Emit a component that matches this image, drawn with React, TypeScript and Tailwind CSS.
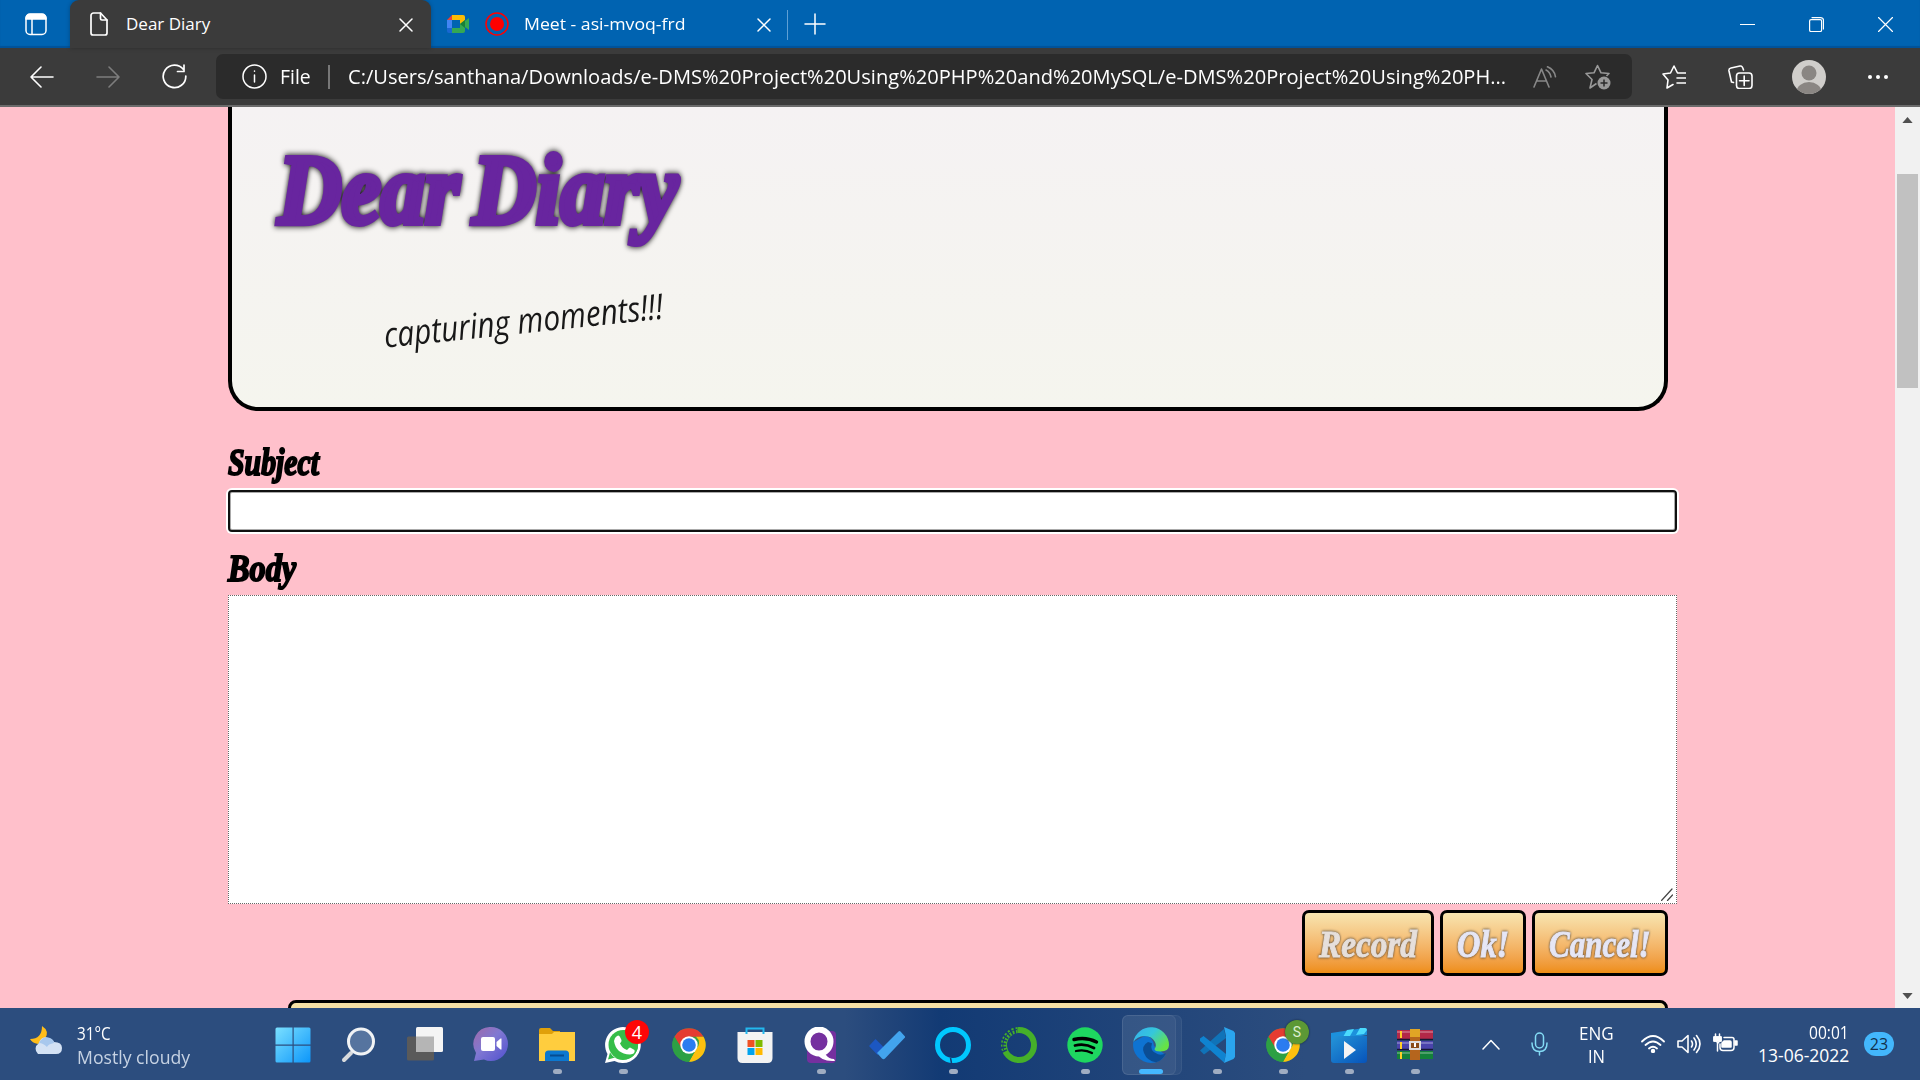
import { useLayoutEffect, useRef, useState } from "react";
import type { ReactNode } from "react";

/** One line of text, condensed or widened to fill the width of its box. */
function Fit({ children, box, className = "" }: { children: string; box: string; className?: string }) {
  const outer = useRef<HTMLSpanElement>(null);
  const inner = useRef<HTMLSpanElement>(null);
  const [scale, setScale] = useState(1);
  useLayoutEffect(() => {
    if (outer.current && inner.current) setScale(outer.current.offsetWidth / inner.current.offsetWidth);
  }, [children]);
  return (
    <span ref={outer} className={`block shrink-0 ${box}`}>
      <span ref={inner} className={`inline-block origin-left whitespace-nowrap ${className}`} style={{ transform: `scaleX(${scale})` }}>
        {children}
      </span>
    </span>
  );
}

function Stroke({ className, box, width = 1.5, children }: { className: string; box: string; width?: number; children: ReactNode }) {
  return (
    <svg viewBox={box} className={`block shrink-0 ${className}`} fill="none" stroke="currentColor" strokeWidth={width} strokeLinecap="round" strokeLinejoin="round">
      {children}
    </svg>
  );
}

function TabBar() {
  return (
    <div className="flex h-12 items-center bg-[#0063b1] text-white shadow-[inset_0_-2px_1px_#00529a]">
      <Stroke className="ml-[25px] h-[23px] w-[22px]" box="0 0 22 23">
        <rect x="1" y="1.5" width="20" height="20" rx="4" />
        <path d="M1 6V5a4 4 0 014-4h12a4 4 0 014 4v1z" fill="currentColor" />
        <path d="M7 6v15" />
      </Stroke>
      <div className="ml-[23px] flex h-12 w-[361px] items-center rounded-t-[9px] bg-[#3b3b3b] shadow-[0_0_4px_#0004]">
        <Stroke className="ml-5 h-[24px] w-[18px]" box="0 0 18 24" width={1.7}>
          <path d="M3.500 1h7L17 8v13a2 2 0 01-2 2H3a2 2 0 01-2-2V3.500A2.500 2.500 0 013.500 1z" />
          <path d="M10.500 1v5.500Q10.500 8 12 8h5" />
        </Stroke>
        <Fit box="ml-[18px] w-[84px]" className="font-['Open_Sans'] text-[17px] leading-6">Dear Diary</Fit>
        <Stroke className="ml-[189px] mt-[2px] h-[14px] w-[14px]" box="0 0 14 14"><path d="M1 1l12 12M13 1L1 13" /></Stroke>
      </div>
      <svg viewBox="0 0 22 18" className="ml-4 h-[18px] w-[22px] shrink-0">
        <path d="M0 5L5 0v5z" fill="#ea4335" /><path d="M5 0h11q2 0 2 2v5l-5 3V5H5z" fill="#fbbc04" />
        <path d="M0 5h5v8H0z" fill="#4285f4" /><path d="M0 13h5v5H2q-2 0-2-2z" fill="#1967d2" />
        <path d="M5 13h8V9l5-4v11q0 2-2 2H5zM18 6l4-3v12l-4-3z" fill="#34a853" /><path d="M13 9l5-4v8z" fill="#188038" />
      </svg>
      <svg viewBox="0 0 24 24" className="ml-4 h-6 w-6 shrink-0"><circle cx="12" cy="12" r="11" fill="none" stroke="#f00" strokeWidth="1.500" /><circle cx="12" cy="12" r="7" fill="#f00" /></svg>
      <Fit box="ml-[15px] w-[161px]" className="font-['Open_Sans'] text-[17px] leading-6">Meet - asi-mvoq-frd</Fit>
      <Stroke className="ml-[72px] mt-[2px] h-[14px] w-[14px]" box="0 0 14 14"><path d="M1 1l12 12M13 1L1 13" /></Stroke>
      <div className="ml-4 mt-[2px] h-[30px] w-px bg-[#5fa0d5]" />
      <Stroke className="ml-4 h-[22px] w-[22px]" box="0 0 22 22"><path d="M11 1v20M1 11h20" /></Stroke>
      <Stroke className="ml-auto h-[15px] w-[15px]" box="0 0 15 15" width={1.2}><path d="M0 7.500h15" /></Stroke>
      <Stroke className="ml-[54px] h-[15px] w-[15px]" box="0 0 15 15" width={1.2}><rect x=".6" y="2.600" width="12" height="12" rx="1.500" /><path d="M3 .6h8.500a3 3 0 013 3V12" /></Stroke>
      <Stroke className="ml-[54px] mr-[27px] h-[15px] w-[15px]" box="0 0 15 15" width={1.2}><path d="M.5.5l14 14M14.500.5l-14 14" /></Stroke>
    </div>
  );
}

function AddressRow() {
  return (
    <div className="flex h-[59px] items-center border-b-2 border-[#6b6b6b] bg-[#3b3b3b] text-white">
      <Stroke className="ml-[30px] h-[22px] w-6" box="0 0 24 22" width={1.6}><path d="M23 11H1M11 1L1 11l10 10" /></Stroke>
      <Stroke className="ml-[42px] h-[22px] w-6 text-[#7d7d7d]" box="0 0 24 22" width={1.6}><path d="M1 11h22M13 1l10 10-10 10" /></Stroke>
      <Stroke className="ml-[42px] h-[25px] w-[25px]" box="0 0 25 25" width={1.7}><path d="M21.500 5.500A11.300 11.300 0 1023.800 12M22 1v6.500h-6.500" /></Stroke>
      <div className="ml-[29px] flex h-[45px] w-[1416px] items-center rounded-[7px] bg-[#2b2b2b]">
        <Stroke className="ml-[26px] h-[25px] w-[25px]" box="0 0 25 25"><circle cx="12.500" cy="12.500" r="11.500" /><path d="M12.500 11v7M12.500 7v.3" /></Stroke>
        <Fit box="ml-[13px] w-[31px]" className="font-['Open_Sans'] text-[20px] leading-7">File</Fit>
        <div className="ml-[17px] h-6 w-[1.500px] bg-[#777]" />
        <Fit box="ml-[18.500px] w-[1158px]" className="font-['Open_Sans'] text-[20px] leading-7">C:/Users/santhana/Downloads/e-DMS%20Project%20Using%20PHP%20and%20MySQL/e-DMS%20Project%20Using%20PH...</Fit>
        <Stroke className="ml-[27px] h-[22px] w-6 text-[#888]" box="0 0 24 22" width={1.6}><path d="M1 21L8.500 3 16 21M4 15h9M13 4q4 2 5 7M14.500.8q7 3 8 10" /></Stroke>
        <svg viewBox="0 0 26 26" className="ml-[28px] h-[26px] w-[26px] shrink-0 text-[#999]">
          <path d="M11.500 19.500L5 24l2-8.500L1 9.500l8-.7L12.500 1.500 16 8.800l8 .7-2.500 2.500" fill="none" stroke="currentColor" strokeWidth="1.600" strokeLinejoin="round" />
          <circle cx="19" cy="19" r="6.500" fill="currentColor" /><path d="M19 15.500v7M15.500 19h7" stroke="#2b2b2b" strokeWidth="1.500" />
        </svg>
      </div>
      <Stroke className="ml-[30px] h-6 w-6" box="0 0 24 24" width={1.6}><path d="M11 19.500L5 23l1-8L1 9l7.500-1L12 1l3.500 7h8M15 13h8.500M15 18h8.500" /></Stroke>
      <Stroke className="ml-[42px] h-6 w-[25px]" box="0 0 25 24" width={1.6}>
        <path d="M5.500 17.500L3.500 17 1 6Q.5 3.500 3 3l9-2q2.500-.5 3.500 4" /><rect x="8.500" y="8" width="15.500" height="15.500" rx="3" /><path d="M16.200 11v9.500M11.500 15.700H21" />
      </Stroke>
      <svg viewBox="0 0 34 34" className="ml-[39px] h-[34px] w-[34px] shrink-0">
        <clipPath id="face"><circle cx="17" cy="17" r="17" /></clipPath>
        <g clipPath="url(#face)"><rect width="34" height="34" fill="#d0cecb" /><circle cx="17" cy="13" r="7.500" fill="#8a8683" /><ellipse cx="17" cy="32" rx="12.500" ry="10" fill="#8a8683" /></g>
      </svg>
      <svg viewBox="0 0 20 4" className="ml-[42px] h-1 w-5 fill-white"><circle cx="2" cy="2" r="2" /><circle cx="10" cy="2" r="2" /><circle cx="18" cy="2" r="2" /></svg>
    </div>
  );
}

const script = "font-['Liberation_Serif'] font-bold italic";

function DiaryButton({ label, box, text, tone }: { label: string; box: string; text: string; tone: string }) {
  return (
    <button className={`flex h-[66px] items-center justify-center rounded-[7px] border-[3px] border-black bg-linear-to-b from-[#f7e5b0] to-[#ee8e12] pt-[2px] ${box}`}>
      <Fit box={text} className={`${script} ${tone} text-[38px] leading-[50px] [-webkit-text-stroke:1px_currentColor] drop-shadow-[0_0_1.5px_#333]`}>{label}</Fit>
    </button>
  );
}

function DiaryPage() {
  return (
    <div className="flex h-[901px] bg-[#ffc0cb]">
      <main className="h-full flex-1 overflow-hidden pl-[228px]">
        <header className="h-[304px] w-[1440px] rounded-b-[30px] border-4 border-t-0 border-black bg-linear-to-b from-[#f5f2f3] to-[#f5f5ee] pl-[46px] pt-[28px]">
          <Fit box="w-[400px] h-[110px]" className={`${script} text-[99px] leading-[110px] text-[#68259f] [word-spacing:-10px] [-webkit-text-stroke:6px_currentColor] drop-shadow-[0_0_3px_#000]`}>Dear Diary</Fit>
          <div className="ml-[105px] mt-[45px] w-[284px] -rotate-6">
            <Fit box="w-[280px] h-[60px]" className="font-['Open_Sans'] text-[35px] italic leading-[60px] text-[#181818]">capturing moments!!!</Fit>
          </div>
        </header>
        <div className="h-[28px]" />
        <Fit box="w-[91px] h-[48px]" className={`${script} text-[38px] leading-[46px] text-black [-webkit-text-stroke:2px_currentColor]`}>Subject</Fit>
        <div className="mt-[3px] h-[42px] w-[1449px] rounded-[4px] border-2 border-[#101010] bg-white shadow-[0_0_0_2px_#fff,inset_0_0_0_1px_#aaa]" />
        <Fit box="mt-[13px] w-[68px] h-[50px]" className={`${script} text-[38px] leading-[46px] text-black [-webkit-text-stroke:2px_currentColor]`}>Body</Fit>
        <div className="flex h-[309px] w-[1449px] items-end justify-end border border-dotted border-[#666] bg-white pb-[2px] pr-[3px]">
          <Stroke className="h-[13px] w-3 text-[#444]" box="0 0 12 13" width={1.2}><path d="M.5 12.500L11 1M6.500 12.500L11.500 7" /></Stroke>
        </div>
        <div className="mt-[6px] flex w-[1440px] justify-end gap-[6px]">
          <DiaryButton label="Record" box="w-[132px]" text="w-[98px]" tone="text-[#e6dfdb]" />
          <DiaryButton label="Ok!" box="w-[86px]" text="w-[52px]" tone="text-[#e6e6f5]" />
          <DiaryButton label="Cancel!" box="w-[136px]" text="w-[102px]" tone="text-[#e6e6f5]" />
        </div>
        <div className="ml-[60px] mt-[24px] h-[60px] w-[1380px] rounded-[8px] border-[3px] border-black bg-[#f5e0a5]" />
      </main>
      <div className="flex w-[25px] flex-col items-center bg-[#f1f1f1]">
        <svg viewBox="0 0 12 7" className="mt-[10px] h-[6px] w-[11px] fill-[#505050]"><path d="M0 7l6-7 6 7z" /></svg>
        <div className="mt-[51px] h-[214px] w-[21px] bg-[#c1c1c1]" />
        <svg viewBox="0 0 12 7" className="mb-[9px] mt-auto h-[6px] w-[11px] fill-[#505050]"><path d="M0 0h12L6 7z" /></svg>
      </div>
    </div>
  );
}

function Chrome() {
  return (
    <g>
      <circle cx="18" cy="18" r="16.700" fill="#34a045" />
      <path d="M3.500 9.700A16.700 16.700 0 0132.500 9.700H18L11 22z" fill="#e53c31" />
      <path d="M32.500 9.700A16.700 16.700 0 0118 34.700l7-12.500a8 8 0 000-12.500z" fill="#fdc00f" />
      <path d="M3.500 9.700l7.500 12.500 7 4 6-2-6 10.500A16.700 16.700 0 013.500 9.700z" fill="#2da044" />
      <circle cx="18" cy="18" r="8.700" fill="#fff" /><circle cx="18" cy="18" r="6.800" fill="#2b7cf0" />
    </g>
  );
}

const apps: { name: string; mark?: "open" | "active"; badge?: string; art: ReactNode }[] = [
  { name: "start", art: <g><defs><linearGradient id="win" x1="0" y1="0" x2="1" y2="1"><stop stopColor="#7be0ff" /><stop offset="1" stopColor="#0c96fa" /></linearGradient></defs><path d="M2 .5h15.500v17H.5V2Q.5.500 2 .500zM18.700.500H34q1.500 0 1.500 1.500v15.500H18.700zM.5 18.700h17v16.800H2q-1.500 0-1.500-1.500zM18.700 18.700h16.800V34q0 1.500-1.500 1.500H18.700z" fill="url(#win)" /></g> },
  { name: "search", art: <g><path d="M10 26l-7 7" stroke="#d8dadd" strokeWidth="4" strokeLinecap="round" /><circle cx="20" cy="14.500" r="12.500" fill="#56749f" stroke="#f1f3f5" strokeWidth="3" /></g> },
  { name: "task view", art: <g><rect x="0" y="9.500" width="27" height="24" rx="1.500" fill="#5a5a5a" /><rect x="9" y="0" width="27" height="25" rx="1.500" fill="#f4f4f4" /><path d="M9 9.500h18V25H9z" fill="#b5b5b5" /></g> },
  { name: "chat", art: <g><defs><linearGradient id="chat" x1="0" y1="0" x2="1" y2="1"><stop stopColor="#a06aa8" /><stop offset=".45" stopColor="#8078d2" /><stop offset="1" stopColor="#5050cf" /></linearGradient></defs><path d="M18 0a17 17 0 110 34q-4 0-7-1.500L1 34l2-8A17 17 0 0118 0z" fill="url(#chat)" /><rect x="8" y="10" width="14" height="14" rx="2" fill="#fff" /><path d="M23.500 15l4-3.500h1v11h-1l-4-3.500z" fill="#fff" /></g> },
  { name: "files", mark: "open", art: <g><path d="M0 3q0-2 2-2h9l3 3h7v7H0z" fill="#e0a00a" /><path d="M0 7h13l2-2h21v29H0z" fill="#ffcd3e" /><path d="M6 34V27q0-3.500 3.500-3.500h17q3.500 0 3.500 3.500v7z" fill="#0c78d0" /><path d="M11 28.500h14" stroke="#064c91" strokeWidth="2" /></g> },
  { name: "whatsapp", mark: "open", badge: "red", art: <g><path d="M18 0a18 18 0 11-8.500 34L0 36l2.500-9A18 18 0 0118 0z" fill="#fff" /><path d="M18.500 3A15 15 0 115 25.500l-2 7 7-2A15 15 0 0018.500 3z" fill="#35bd48" /><circle cx="18.300" cy="17.800" r="14.800" fill="#35bd48" /><path d="M12 9q2-1.500 3 1l1.500 3q.5 1-1.500 3.500 2.500 5 7 6.500l2-2q1-1 2 0l3.500 2q1 4-4.500 4.500Q11 27 9 14q.5-3.500 3-5z" fill="#fff" /></g> },
  { name: "chrome", art: <Chrome /> },
  { name: "store", art: <g><path d="M.5 5h35v26q0 5-5 5h-25q-5 0-5-5z" fill="#f3f3f3" /><path d="M9.500 7V1.500h17V7" fill="none" stroke="#22b8ee" strokeWidth="2" /><path d="M10.500 13h7v7h-7z" fill="#f05123" /><path d="M18.500 13h7v7h-7z" fill="#7fba00" /><path d="M10.500 21h7v7h-7z" fill="#00a3ee" /><path d="M18.500 21h7v7h-7z" fill="#ffb900" /></g> },
  { name: "quick", mark: "open", art: <g><rect x="4" y="4" width="29" height="32" rx="4" fill="#75309f" /><ellipse cx="16" cy="14.500" rx="11.500" ry="12" fill="#75309f" stroke="#fff" strokeWidth="6" /><path d="M14 26l7-2 2 4q3 4 8 4l1 2q-14 1-18-8z" fill="#fff" /></g> },
  { name: "todo", art: <g><path d="M0 19l6.500-7 9 9-7 7z" fill="#1c57c2" /><path d="M8 26L29.500 4.500Q30.500 3.500 31.500 4.500L36 9.500Q36.500 10 35.500 11L16 31.500q-1.500 1.500-3 0z" fill="#42a4ee" /></g> },
  { name: "alexa", mark: "open", art: <g><circle cx="18" cy="18" r="15.500" fill="none" stroke="#00c8ff" strokeWidth="5" /><path d="M15.500 31l1 5" stroke="#173c73" strokeWidth="1.500" /></g> },
  { name: "anaconda", art: <g><circle cx="18" cy="18" r="15" fill="none" stroke="#45b029" strokeWidth="6" /><path d="M3 25A15.500 15.500 0 0117 3" fill="none" stroke="#173c73" strokeWidth="7" strokeDasharray="1.800 2" /><path d="M2.500 23A16 16 0 0116 2.500" fill="none" stroke="#173c73" strokeWidth="1" /></g> },
  { name: "spotify", mark: "open", art: <g><circle cx="18" cy="18" r="17.700" fill="#1ed760" /><g fill="none" stroke="#000" strokeLinecap="round"><path d="M7 12.500q12-3 22.500 2.500" strokeWidth="3.400" /><path d="M8 18.500q10-2.500 19 2.500" strokeWidth="2.800" /><path d="M9 24q9-2 16 2" strokeWidth="2.300" /></g></g> },
  { name: "edge", mark: "active", art: <g><defs><linearGradient id="edge" x1="0" y1="0" x2="1" y2=".6"><stop stopColor="#35aef0" /><stop offset=".5" stopColor="#35c7dc" /><stop offset="1" stopColor="#66e345" /></linearGradient></defs><path d="M.3 15A18 18 0 0018 36q9 0 14.500-8L21 19Q20 9 11.500 9z" fill="#0e73d2" /><path d="M15 15Q8 19 11 26q3 8 12 9.300 7-2 10-9-4 2-8 1-9-3-6-11z" fill="#0b4d94" /><path d="M.3 15A18 18 0 0136 18q0 6.500-8.500 6.500-6 0-6-2.500 2.500-3 .5-7Q19 9 11.500 9 4 9.500.3 15z" fill="url(#edge)" /></g> },
  { name: "code", mark: "open", art: <g><path d="M1 23.500L25 2l2 9L5 27.500z" fill="#1073b8" /><path d="M1 11.500L4.500 9 27 27l-2 8.500L1 14z" fill="#0f83d0" /><path d="M25 0l9.500 4 1.500 2v24l-1.500 2L25 36l2-9V9z" fill="#2aa5ee" /></g> },
  { name: "chrome profile", mark: "open", badge: "green", art: <Chrome /> },
  { name: "movies", mark: "open", art: <g><defs><linearGradient id="film" x1="0" y1="0" x2="1" y2="1"><stop stopColor="#2495d8" /><stop offset="1" stopColor="#0753ba" /></linearGradient></defs><path d="M0 6L33 1q3 0 3 3v4L0 14z" fill="#1c91dc" /><path d="M16 3l-4 7 7-1 4-7zM29 1l-4 7 8-1 3-4q0-2-2-2z" fill="#4bdafd" /><path d="M0 14l5-5h31v24q0 3-3 3H3q-3 0-3-3z" fill="url(#film)" /><path d="M13 14l12 9-12 9z" fill="#f4f4f4" /></g> },
  { name: "archive", mark: "open", art: <g><path d="M0 3h36v9H0z" fill="#b32848" /><path d="M0 14h36v8H0z" fill="#4a43ac" /><path d="M0 24h36v8H0z" fill="#14813a" /><path d="M0 5h36M0 16h36M0 26h36" stroke="#fff" strokeOpacity=".25" strokeWidth="2" /><path d="M0 12.500h36M0 22.500h36" stroke="#171734" strokeWidth="1.500" /><path d="M3 4h2v7H3zM3 15h2v7H3zM3 25h2v7H3z" fill="#ffd028" /><path d="M13 2h10v31H13z" fill="#b5651d" /><path d="M13 2h10v8H13z" fill="#e0a525" /><path d="M13 15h10v7H13z" fill="#8a4c18" stroke="#ddd" strokeWidth="2" /><path d="M18 16v4" stroke="#fff" strokeWidth="2" /></g> },
];

function Taskbar() {
  return (
    <footer className="flex h-[72px] items-center bg-linear-to-r from-[#2c4d7e] from-44% via-[#123a74] via-49% to-[#2c4d7e] to-68% font-['Open_Sans'] text-white">
      <svg viewBox="0 0 32 30" className="mb-[6px] ml-[30px] h-[30px] w-8">
        <path d="M12 0q8 5 3 13l-7 5q-6-1-8-5 12 0 12-13z" fill="#ffbd19" /><path d="M8 28a6.500 6.500 0 01.5-10.500Q12 9 18 12q5 1 6 4 8 0 8 6t-6 6z" fill="#d4e2f4" /><path d="M9 17q4-8 11-5 4 2 4 5-6 1-7 4-4-4-8-4z" fill="#a8c8ed" />
      </svg>
      <div className="ml-[15px] w-[183px] pt-[2px] text-[17.500px] leading-[24px]">
        <Fit box="w-[34px]">31°C</Fit>
        <Fit box="w-[113px]" className="text-[#c6d2e3]">Mostly cloudy</Fit>
      </div>
      <nav className="flex">
        {apps.map((app) => (
          <div key={app.name} className="relative flex h-[72px] w-[66px] items-center justify-center">
            {app.mark === "active" && <div className="absolute left-[4px] top-[7px] h-[60px] w-[60px] rounded-[6px] border border-white/5 bg-white/5" />}
            {app.mark === "active" && <div className="absolute left-[4px] top-[7px] h-[60px] w-[54px] rounded-[6px] border border-white/5 bg-white/5" />}
            <svg viewBox="0 0 36 36" className="relative mt-[2px] h-9 w-9">{app.art}</svg>
            {app.mark === "open" && <div className="absolute left-[29px] top-[61px] h-[5px] w-[9px] rounded-full bg-[#a0adc2]" />}
            {app.mark === "active" && <div className="absolute left-[21px] top-[61px] h-[5px] w-6 rounded-full bg-[#45b8ff]" />}
            {app.badge === "red" && <div className="absolute left-[35px] top-[12px] flex h-6 w-6 items-center justify-center rounded-full bg-[#fd0606] text-[18px]">4</div>}
            {app.badge === "green" && <div className="absolute left-[35px] top-[12px] flex h-6 w-6 items-center justify-center rounded-full bg-[#5c9835] font-[Roboto] text-[14px] text-[#dcefd0] shadow-[0_0_2px_#123]">S</div>}
          </div>
        ))}
      </nav>
      <Stroke className="ml-[34px] h-[11px] w-[18px]" box="0 0 18 11"><path d="M1 10l8-8.500L17 10" /></Stroke>
      <Stroke className="ml-[31px] h-6 w-[17px] text-[#84dcf5]" box="0 0 17 24"><rect x="4.500" y="1" width="8" height="15" rx="4" /><path d="M1 11q0 8.500 7.500 8.500T16 11M8.500 19.500V23" /></Stroke>
      <div className="ml-[30px] flex w-[36px] flex-col items-center pt-[2px] text-[17.500px] leading-[23px]">
        <Fit box="w-[35px]">ENG</Fit>
        <Fit box="w-[17px]">IN</Fit>
      </div>
      <Stroke className="ml-[27px] h-[18px] w-6" box="0 0 24 18" width={1.8}><path d="M1 6.500Q12-4.500 23 6.500M4.500 10q7.500-7 15 0M8 13.500q4-3.500 8 0" /><circle cx="12" cy="16" r="1.300" fill="currentColor" /></Stroke>
      <Stroke className="ml-3 h-5 w-6" box="0 0 24 20" width={1.6}><path d="M1 7h4l6-5.500v17L5 13H1zM14.500 7q2 3 0 6M17 4q4.500 6 0 12M19.500 1.500q7 8.500 0 17" /></Stroke>
      <Stroke className="ml-3 mb-[3px] h-[19px] w-[25px]" box="0 0 25 19" width={1.5}><path d="M2.500 1v3M6.500 1v3M1 4h7v4H6.500L5 10 3 8H1zM4.500 9v9M11 4.500h8q2 0 2 2v8q0 3-3 3h-8q-3 0-3-3V11" /><path d="M11 8h6q1 0 1 1v5H9v-4zM1 4h7v4H1zM22 8h2v4h-2z" fill="currentColor" /></Stroke>
      <div className="ml-[20px] flex w-[91px] flex-col items-end text-[17.500px] leading-[23px]">
        <Fit box="w-[40px]">00:01</Fit>
        <Fit box="w-[91px]">13-06-2022</Fit>
      </div>
      <div className="ml-[15px] flex h-6 w-[30px] items-center justify-center rounded-full bg-[#43b7fc] text-[16px] text-[#12304c]">23</div>
    </footer>
  );
}

export default function App() {
  return (
    <div className="h-[1080px] w-[1920px] overflow-hidden">
      <TabBar />
      <AddressRow />
      <DiaryPage />
      <Taskbar />
    </div>
  );
}
